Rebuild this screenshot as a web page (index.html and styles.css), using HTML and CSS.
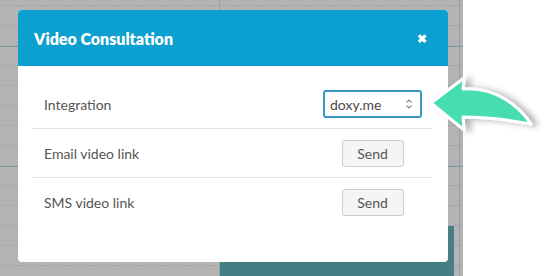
FILE: index.html
```html
<!DOCTYPE html>
<html lang="en">
<head>
    <meta charset="UTF-8">
    <title>Video Consultation</title>
    <link rel="stylesheet" href="styles.css">
</head>
<body>
    <div class="page">
        <div class="page-block"></div>

        <div class="modal">
            <div class="modal-header">
                <h2>Video Consultation</h2>
                <span class="close">&#10006;</span>
            </div>
            <div class="modal-body">
                <div class="row">
                    <span class="row-label">Integration</span>
                    <div class="select">
                        <span>doxy.me</span>
                        <svg width="8" height="12" viewBox="0 0 8 12">
                            <path d="M1.5 4.5 L4 2 L6.5 4.5 M1.5 7.5 L4 10 L6.5 7.5" fill="none" stroke="#888" stroke-width="1.2"/>
                        </svg>
                    </div>
                </div>
                <div class="row">
                    <span class="row-label">Email video link</span>
                    <button class="btn">Send</button>
                </div>
                <div class="row">
                    <span class="row-label">SMS video link</span>
                    <button class="btn">Send</button>
                </div>
            </div>
        </div>

        <svg class="pointer" width="128" height="76" viewBox="0 0 128 76">
            <defs>
                <filter id="shadow" x="-20%" y="-30%" width="150%" height="170%">
                    <feDropShadow dx="6" dy="1" stdDeviation="3" flood-color="#000" flood-opacity="0.3"/>
                </filter>
            </defs>
            <path d="M11 33 L44 8 L43 19 C75 16 100 37 111 54 C95 51 70 47 43 47 L44 60 Z"
                  fill="#47ddb0" stroke="#fff" stroke-width="3" stroke-linejoin="round" filter="url(#shadow)"/>
        </svg>
    </div>
</body>
</html>
```

FILE: styles.css
```css
* {
    box-sizing: border-box;
}

body {
    margin: 0;
    width: 548px;
    height: 276px;
    overflow: hidden;
    background: #fff;
    font-family: 'Lato', 'Liberation Sans', sans-serif;
}

.page {
    position: relative;
    width: 463px;
    height: 276px;
    padding: 226px 0 0 220px;
    background-color: #b4b4b4;
    background-image:
        linear-gradient(to right, transparent 219px, #8fa3aa 219px, #8fa3aa 220px, transparent 220px, transparent 459px, #8fa3aa 459px, #8fa3aa 460px, transparent 460px),
        linear-gradient(to bottom, transparent 46px, #7e989e 46px, #7e989e 47px, transparent 47px, transparent 166px, #7e989e 166px, #7e989e 167px, transparent 167px),
        repeating-linear-gradient(to right, #b4b4b4 0 1px, transparent 1px 3px),
        repeating-linear-gradient(to bottom, transparent 0 5px, #a2a6aa 5px 6px, transparent 6px 20px);
}

.page-block {
    width: 234px;
    height: 50px;
    background: #467f83;
}

.modal {
    position: absolute;
    left: 18px;
    top: 10px;
    width: 430px;
    height: 252px;
    background: #fff;
    border-radius: 4px;
    overflow: hidden;
}

.modal-header {
    height: 56px;
    display: flex;
    align-items: center;
    justify-content: space-between;
    padding: 0 21px 0 16px;
    background: #0ba0d0;
    color: #fff;
}

.modal-header h2 {
    margin: 0;
    font-size: 16px;
    font-weight: 800;
}

.close {
    font-size: 12px;
    font-weight: 700;
}

.modal-body {
    padding: 14px 16px 0 14px;
}

.row {
    height: 49px;
    display: grid;
    grid-template-columns: 1fr 99px;
    align-items: center;
    padding: 0 10px 0 12px;
    border-bottom: 1px solid #e3e3e3;
}

.row:last-child {
    border-bottom: none;
}

.row-label {
    font-size: 14px;
    color: #555;
}

.select {
    height: 28px;
    display: flex;
    align-items: center;
    justify-content: space-between;
    padding: 0 7px 0 5px;
    border: 2px solid #3b98c6;
    border-radius: 3px;
    font-size: 14px;
    color: #4a4a4a;
}

.btn {
    justify-self: center;
    width: 62px;
    height: 27px;
    padding: 0;
    background: #f5f5f5;
    border: 1px solid #ccc;
    border-radius: 3px;
    font-family: inherit;
    font-size: 14px;
    color: #555;
}

.pointer {
    position: absolute;
    left: 420px;
    top: 70px;
    overflow: visible;
}
```
